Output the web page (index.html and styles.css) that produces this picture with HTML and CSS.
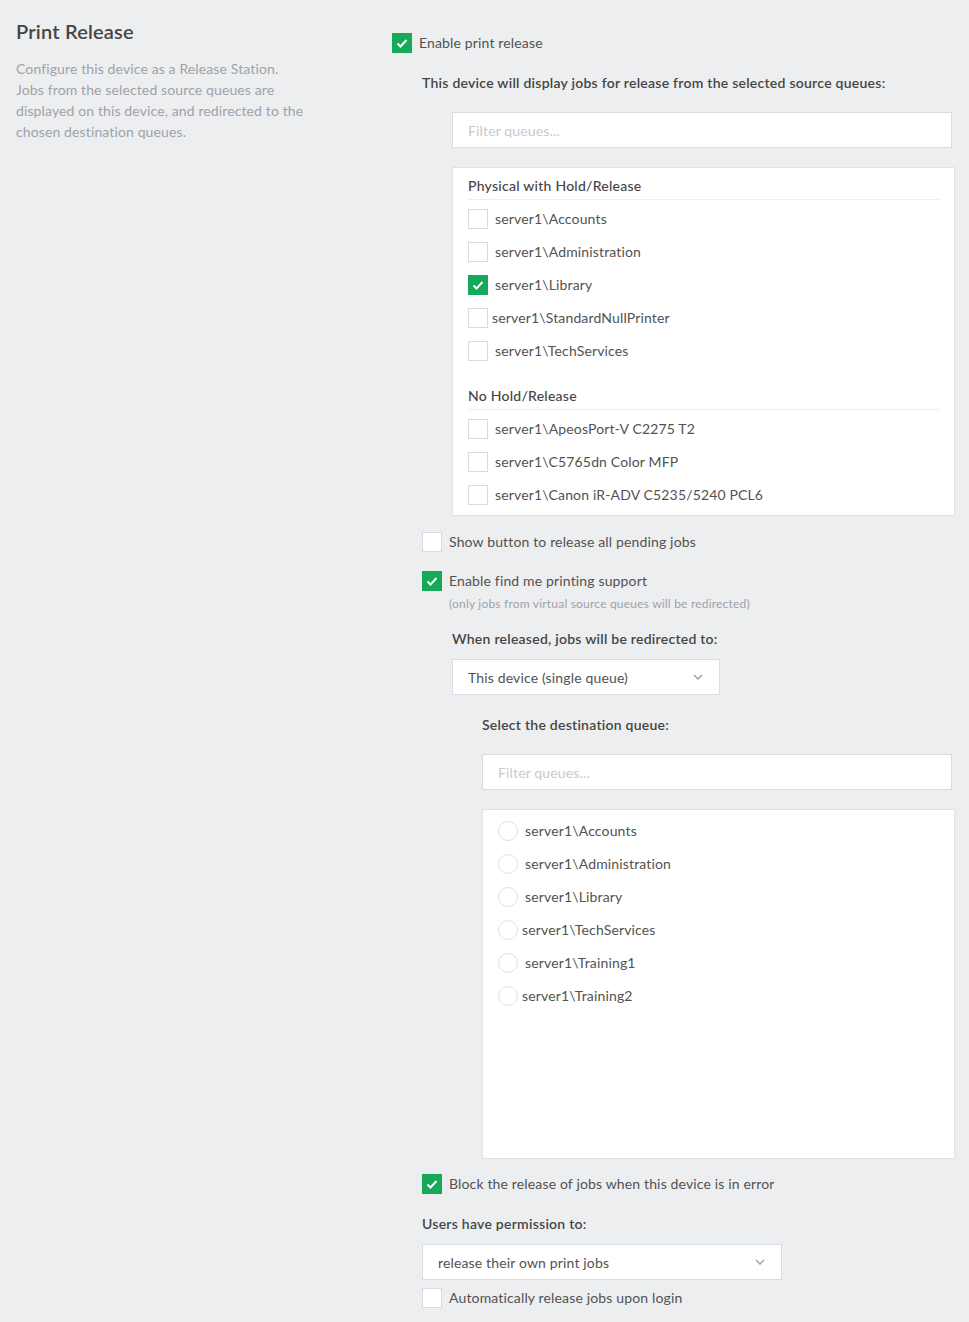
FILE: index.html
```html
<!DOCTYPE html>
<html lang="en">
<head>
  <meta charset="UTF-8">
  <title>Print Release</title>
  <link rel="stylesheet" href="styles.css">
</head>
<body>
  <div class="page">
    <div class="side">
      <h2 class="title">Print Release</h2>
      <p class="intro">Configure this device as a Release Station. Jobs from the selected source queues are displayed on this device, and redirected to the chosen destination queues.</p>
    </div>

    <div class="main">
      <label class="check-row">
        <span class="box checked"><svg viewBox="0 0 18 18"><polyline points="4.5,9.5 7.5,12.5 13.5,6" /></svg></span>
        <span class="label">Enable print release</span>
      </label>

      <div class="indent">
        <p class="field-title">This device will display jobs for release from the selected source queues:</p>

        <div class="indent">
          <input class="filter" type="text" placeholder="Filter queues...">

          <div class="queue-box">
            <div class="group">
              <div class="group-title">Physical with Hold/Release</div>
              <label class="item"><span class="box"></span><span class="label">server1\Accounts</span></label>
              <label class="item"><span class="box"></span><span class="label">server1\Administration</span></label>
              <label class="item"><span class="box checked"><svg viewBox="0 0 18 18"><polyline points="4.5,9.5 7.5,12.5 13.5,6" /></svg></span><span class="label">server1\Library</span></label>
              <label class="item"><span class="box"></span><span class="label tight">server1\StandardNullPrinter</span></label>
              <label class="item"><span class="box"></span><span class="label">server1\TechServices</span></label>
            </div>
            <div class="group">
              <div class="group-title">No Hold/Release</div>
              <label class="item"><span class="box"></span><span class="label">server1\ApeosPort-V C2275 T2</span></label>
              <label class="item"><span class="box"></span><span class="label">server1\C5765dn Color MFP</span></label>
              <label class="item"><span class="box"></span><span class="label">server1\Canon iR-ADV C5235/5240 PCL6</span></label>
            </div>
          </div>
        </div>

        <label class="check-row gap-16">
          <span class="box"></span>
          <span class="label">Show button to release all pending jobs</span>
        </label>

        <label class="check-row gap-19">
          <span class="box checked"><svg viewBox="0 0 18 18"><polyline points="4.5,9.5 7.5,12.5 13.5,6" /></svg></span>
          <span class="label">Enable find me printing support</span>
        </label>
        <div class="hint">(only jobs from virtual source queues will be redirected)</div>

        <div class="indent">
          <p class="field-title after-hint">When released, jobs will be redirected to:</p>
          <div class="select">
            <span>This device (single queue)</span>
            <svg class="chevron" viewBox="0 0 10 6"><polyline points="1,1 5,5 9,1" /></svg>
          </div>

          <div class="indent">
            <p class="field-title">Select the destination queue:</p>
            <input class="filter" type="text" placeholder="Filter queues...">

            <div class="dest-box">
              <label class="item"><span class="radio"></span><span class="label">server1\Accounts</span></label>
              <label class="item"><span class="radio"></span><span class="label">server1\Administration</span></label>
              <label class="item"><span class="radio"></span><span class="label">server1\Library</span></label>
              <label class="item"><span class="radio"></span><span class="label tight">server1\TechServices</span></label>
              <label class="item"><span class="radio"></span><span class="label">server1\Training1</span></label>
              <label class="item"><span class="radio"></span><span class="label tight">server1\Training2</span></label>
            </div>
          </div>
        </div>

        <label class="check-row gap-15">
          <span class="box checked"><svg viewBox="0 0 18 18"><polyline points="4.5,9.5 7.5,12.5 13.5,6" /></svg></span>
          <span class="label">Block the release of jobs when this device is in error</span>
        </label>

        <p class="field-title">Users have permission to:</p>
        <div class="select wide">
          <span>release their own print jobs</span>
          <svg class="chevron" viewBox="0 0 10 6"><polyline points="1,1 5,5 9,1" /></svg>
        </div>

        <label class="check-row gap-8">
          <span class="box"></span>
          <span class="label">Automatically release jobs upon login</span>
        </label>
      </div>
    </div>
  </div>
</body>
</html>
```

FILE: styles.css
```css
body {
  margin: 0;
  background: #edeef0;
  font-family: Lato, "Liberation Sans", sans-serif;
  font-size: 14px;
  letter-spacing: 0.15px;
  color: #525252;
}
.page {
  display: flex;
  padding: 0 14px 0 16px;
}
.side {
  width: 376px;
  flex-shrink: 0;
  padding-top: 19px;
}
.title {
  margin: 0;
  font-size: 20px;
  line-height: 24px;
  font-weight: 600;
  letter-spacing: 0.2px;
  color: #454545;
}
.intro {
  margin: 15px 0 0;
  width: 290px;
  line-height: 21px;
  letter-spacing: 0.12px;
  color: #9ea2a9;
}
.main {
  flex: 1;
  padding-top: 33px;
}
.indent {
  padding-left: 30px;
}
.check-row, .item {
  display: flex;
  align-items: center;
  height: 20px;
  line-height: 20px;
}
.gap-8 { margin-top: 8px; }
.gap-15 { margin-top: 15px; }
.gap-16 { margin-top: 16px; }
.gap-19 { margin-top: 19px; }
.box, .radio {
  width: 20px;
  height: 20px;
  box-sizing: border-box;
  border: 1px solid #d5dbe0;
  background: #fff;
  flex-shrink: 0;
  margin-right: 7px;
}
.radio {
  border-radius: 50%;
  border-color: #dde1e5;
}
.box.checked {
  background: #17a95a;
  border-color: #17a95a;
}
.box svg {
  display: block;
  width: 18px;
  height: 18px;
  fill: none;
  stroke: #fff;
  stroke-width: 2;
}
.label.tight {
  margin-left: -3px;
}
.field-title {
  margin: 20px 0 0;
  line-height: 20px;
  font-weight: 600;
  letter-spacing: 0.25px;
  color: #454545;
}
.field-title.after-hint {
  margin-top: 17px;
}
.hint {
  margin: 5px 0 0 27px;
  font-size: 12px;
  line-height: 16px;
  letter-spacing: 0.2px;
  color: #9ea2a9;
}
.filter {
  display: block;
  box-sizing: border-box;
  width: calc(100% - 3px);
  height: 36px;
  margin-top: 19px;
  padding: 0 15px;
  border: 1px solid #d7dde2;
  background: #fff;
  font: inherit;
  letter-spacing: inherit;
  color: #525252;
  outline: none;
}
.filter::placeholder {
  color: #c5cbd1;
}
.queue-box {
  margin-top: 19px;
  padding: 8px 15px 10px;
  border: 1px solid #dfe3e7;
  background: #fff;
}
.group + .group {
  margin-top: 25px;
}
.group-title {
  line-height: 20px;
  padding-bottom: 3px;
  margin-bottom: 9px;
  border-bottom: 1px solid #eceef1;
  font-weight: 500;
  letter-spacing: 0.25px;
  color: #454545;
}
.item + .item {
  margin-top: 13px;
}
.dest-box {
  box-sizing: border-box;
  height: 350px;
  margin-top: 19px;
  padding: 11px 15px;
  border: 1px solid #dfe3e7;
  background: #fff;
}
.select {
  display: flex;
  align-items: center;
  justify-content: space-between;
  box-sizing: border-box;
  width: 268px;
  height: 36px;
  margin-top: 10px;
  padding: 0 16px 0 15px;
  border: 1px solid #d7dde2;
  background: #fff;
}
.select.wide {
  width: 360px;
}
.chevron {
  width: 10px;
  height: 6px;
  fill: none;
  stroke: #a0a5ab;
  stroke-width: 1.5;
}
```
